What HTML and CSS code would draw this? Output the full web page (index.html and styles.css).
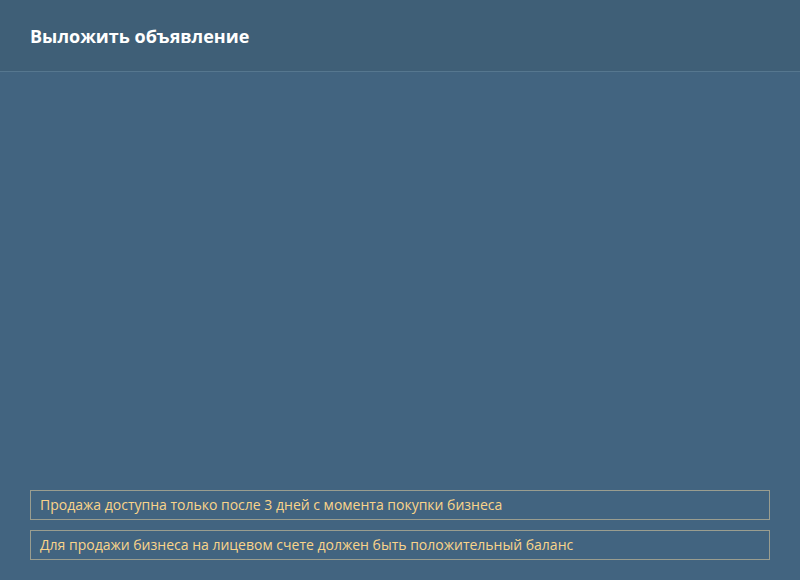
FILE: index.html
```html
<!DOCTYPE html>
<html lang="ru">
<head>
<meta charset="utf-8">
<link rel="stylesheet" href="styles.css">
</head>
<body>
<div class="page">
  <header class="header">
    <h1 class="title">Выложить объявление</h1>
  </header>
  <main class="content">
    <div class="notice">Продажа доступна только после 3 дней с момента покупки бизнеса</div>
    <div class="notice">Для продажи бизнеса на лицевом счете должен быть положительный баланс</div>
  </main>
</div>
</body>
</html>
```
FILE: styles.css
```css
html, body {
  margin: 0;
  padding: 0;
  width: 800px;
  height: 580px;
  overflow: hidden;
  background: #426480;
  font-family: "Open Sans", "Noto Sans", sans-serif;
}
.page {
  display: flex;
  flex-direction: column;
  height: 580px;
}
.header {
  height: 71px;
  background: #3f5f77;
  border-bottom: 1px solid #56778f;
  display: flex;
  align-items: center;
  padding: 0 30px;
  box-sizing: content-box;
}
.title {
  margin: 0;
  color: #ffffff;
  font-size: 18px;
  font-weight: 700;
  line-height: 24px;
}
.content {
  flex: 1;
  display: flex;
  flex-direction: column;
  justify-content: flex-end;
  gap: 10px;
  padding: 0 30px 20px;
}
.notice {
  height: 30px;
  box-sizing: border-box;
  border: 1px solid #9a9d8f;
  color: #fad48a;
  font-size: 14px;
  line-height: 28px;
  padding: 0 9px;
}
```
